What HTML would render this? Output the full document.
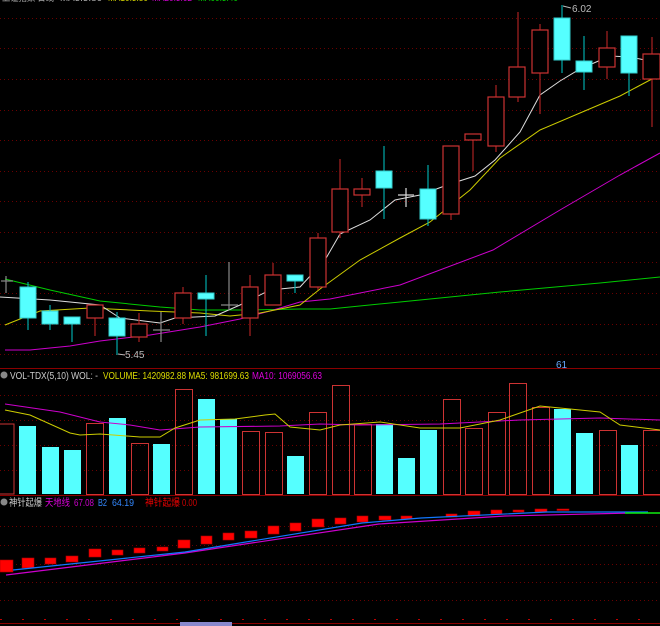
<!DOCTYPE html>
<html><head><meta charset="utf-8"><style>
html,body{margin:0;padding:0;background:#000;width:660px;height:626px;overflow:hidden}
svg{display:block}
text{font-family:"Liberation Sans","Noto Sans CJK SC",sans-serif;font-size:10px}
</style></head><body>
<svg width="660" height="626" viewBox="0 0 660 626" xmlns="http://www.w3.org/2000/svg">
<rect width="660" height="626" fill="#000"/>
<g stroke="#6a0000" stroke-width="1" stroke-dasharray="1,3">
<line x1="0" y1="18.5" x2="660" y2="18.5"/><line x1="0" y1="48.5" x2="660" y2="48.5"/>
<line x1="0" y1="79.5" x2="660" y2="79.5"/><line x1="0" y1="110.5" x2="660" y2="110.5"/>
<line x1="0" y1="140.5" x2="660" y2="140.5"/><line x1="0" y1="171.5" x2="660" y2="171.5"/>
<line x1="0" y1="201.5" x2="660" y2="201.5"/><line x1="0" y1="232.5" x2="660" y2="232.5"/>
<line x1="0" y1="262.5" x2="660" y2="262.5"/><line x1="0" y1="293.5" x2="660" y2="293.5"/>
<line x1="0" y1="324.5" x2="660" y2="324.5"/><line x1="0" y1="354.5" x2="660" y2="354.5"/>
<line x1="0" y1="395.5" x2="660" y2="395.5"/><line x1="0" y1="420.5" x2="660" y2="420.5"/>
<line x1="0" y1="445.5" x2="660" y2="445.5"/><line x1="0" y1="470.5" x2="660" y2="470.5"/>
<line x1="0" y1="526.5" x2="660" y2="526.5"/><line x1="0" y1="545.5" x2="660" y2="545.5"/>
<line x1="0" y1="564.5" x2="660" y2="564.5"/><line x1="0" y1="582.5" x2="660" y2="582.5"/>
<line x1="0" y1="600.5" x2="660" y2="600.5"/>
</g>
<line x1="0" y1="619.5" x2="660" y2="619.5" stroke="#c00000" stroke-dasharray="2,20"/>
<line x1="0" y1="368.5" x2="660" y2="368.5" stroke="#8a0000"/>
<line x1="0" y1="495.5" x2="660" y2="495.5" stroke="#8a0000"/>
<line x1="0" y1="623.5" x2="660" y2="623.5" stroke="#8a0000"/>
<rect x="180" y="622" width="52" height="4" fill="#8888cc"/>

<text x="2" y="1" fill="#aaa" textLength="52" lengthAdjust="spacingAndGlyphs">上证指数 日线</text>
<text x="60" y="1" fill="#aaa" textLength="42" lengthAdjust="spacingAndGlyphs">MA5:5.86</text><text x="108" y="1" fill="#cc0" textLength="40" lengthAdjust="spacingAndGlyphs">MA10:5.80</text><text x="152" y="1" fill="#c0c" textLength="40" lengthAdjust="spacingAndGlyphs">MA20:5.62</text><text x="198" y="1" fill="#0c0" textLength="40" lengthAdjust="spacingAndGlyphs">MA60:5.40</text>

<polyline fill="none" stroke="#0c0" stroke-width="1" points="5,279 50,290 100,301 160,307 200,310 250,310 300,309 330,309 400,302 500,292 600,283 660,277"/>
<polyline fill="none" stroke="#c0c" stroke-width="1" points="5,350 30,350 70,346 100,341 150,335 200,327 240,319 270,311 300,302 330,299 400,285 493,250 560,210 620,175 660,153"/>
<polyline fill="none" stroke="#cc0" stroke-width="1" points="5,325 40,311 90,308 150,311 200,313 230,316 260,313 300,305 320,289 360,260 400,238 430,222 470,190 500,158 540,130 580,113 620,96 650,80 660,76"/>
<polyline fill="none" stroke="#ddd" stroke-width="1" points="0,297 50,300 100,305 120,318 160,323 175,318 215,316 240,305 270,290 300,287 325,260 340,234 370,220 395,200 420,195 450,184 475,176 495,160 520,132 540,95 560,81 580,69 610,56 630,57 660,63"/>

<g stroke-width="1.2">
<g stroke="#0aa"><line x1="28" y1="282" x2="28" y2="330"/><line x1="50" y1="305" x2="50" y2="330"/><line x1="72" y1="317" x2="72" y2="342"/><line x1="117" y1="312" x2="117" y2="355"/><line x1="206" y1="275" x2="206" y2="336"/><line x1="295" y1="275" x2="295" y2="293"/><line x1="384" y1="146" x2="384" y2="219"/><line x1="428" y1="165" x2="428" y2="226"/><line x1="562" y1="5" x2="562" y2="73"/><line x1="584" y1="36" x2="584" y2="90"/><line x1="629" y1="36" x2="629" y2="96"/></g>
<g stroke="#a22"><line x1="95" y1="305" x2="95" y2="336"/><line x1="139" y1="313" x2="139" y2="342"/><line x1="183" y1="287" x2="183" y2="324"/><line x1="250" y1="275" x2="250" y2="336"/><line x1="273" y1="263" x2="273" y2="305"/><line x1="318" y1="233" x2="318" y2="290"/><line x1="340" y1="159" x2="340" y2="238"/><line x1="362" y1="178" x2="362" y2="207"/><line x1="451" y1="146" x2="451" y2="220"/><line x1="473" y1="134" x2="473" y2="171"/><line x1="496" y1="85" x2="496" y2="152"/><line x1="518" y1="12" x2="518" y2="102"/><line x1="540" y1="24" x2="540" y2="114"/><line x1="607" y1="31" x2="607" y2="79"/><line x1="652" y1="37" x2="652" y2="127"/></g>
<g stroke="#888"><line x1="6" y1="276" x2="6" y2="293"/><line x1="1" y1="281" x2="13" y2="281"/><line x1="161" y1="312" x2="161" y2="342"/><line x1="153" y1="330" x2="170" y2="330"/><line x1="229" y1="262" x2="229" y2="310"/><line x1="221" y1="305" x2="238" y2="305"/></g>
<g stroke="#ddd"><line x1="406" y1="188" x2="406" y2="207"/><line x1="398" y1="195" x2="414" y2="195"/></g>
</g>
<g fill="#5ff" stroke="#3cc">
<rect x="20" y="287" width="16" height="31"/><rect x="42" y="311" width="16" height="13"/><rect x="64" y="317" width="16" height="7"/><rect x="109" y="318" width="16" height="18"/><rect x="198" y="293" width="16" height="6"/><rect x="287" y="275" width="16" height="6"/><rect x="376" y="171" width="16" height="17"/><rect x="420" y="189" width="16" height="30"/><rect x="554" y="18" width="16" height="42"/><rect x="576" y="61" width="16" height="11"/><rect x="621" y="36" width="16" height="37"/>
</g>
<g fill="#000" stroke="#c33" stroke-width="1.2">
<rect x="87" y="305" width="16" height="13"/><rect x="131" y="324" width="16" height="13"/><rect x="175" y="293" width="16" height="25"/><rect x="242" y="287" width="16" height="31"/><rect x="265" y="275" width="16" height="30"/><rect x="310" y="238" width="16" height="49"/><rect x="332" y="189" width="16" height="43"/><rect x="354" y="189" width="16" height="6"/><rect x="443" y="146" width="16" height="68"/><rect x="465" y="134" width="16" height="6"/><rect x="488" y="97" width="16" height="49"/><rect x="509" y="67" width="16" height="30"/><rect x="532" y="30" width="16" height="43"/><rect x="599" y="48" width="16" height="19"/><rect x="643" y="54" width="17" height="25"/>
</g>
<text x="572" y="12" fill="#bbb">6.02</text><line x1="563" y1="6" x2="571" y2="8" stroke="#bbb"/>
<text x="125" y="358" fill="#bbb">5.45</text><line x1="118" y1="354" x2="125" y2="355" stroke="#bbb"/>
<text x="556" y="368" fill="#6af" font-size="8">61</text>

<circle cx="4" cy="375" r="3.5" fill="#888"/>
<text x="10" y="379" fill="#ccc" textLength="88" lengthAdjust="spacingAndGlyphs">VOL-TDX(5,10) WOL: -</text>
<text x="103" y="379" fill="#dd0" textLength="146" lengthAdjust="spacingAndGlyphs">VOLUME: 1420982.88 MA5: 981699.63</text>
<text x="252" y="379" fill="#d0d" textLength="70" lengthAdjust="spacingAndGlyphs">MA10: 1069056.63</text>

<g fill="#5ff">
<rect x="19" y="426" width="17" height="68"/><rect x="42" y="447" width="17" height="47"/><rect x="64" y="450" width="17" height="44"/><rect x="109" y="418" width="17" height="76"/><rect x="153" y="444" width="17" height="50"/><rect x="198" y="399" width="17" height="95"/><rect x="220" y="419" width="17" height="75"/><rect x="287" y="456" width="17" height="38"/><rect x="376" y="424" width="17" height="70"/><rect x="398" y="458" width="17" height="36"/><rect x="420" y="430" width="17" height="64"/><rect x="554" y="409" width="17" height="85"/><rect x="576" y="433" width="17" height="61"/><rect x="621" y="445" width="17" height="49"/>
</g>
<g fill="none" stroke="#c33" stroke-width="1">
<rect x="-1" y="424" width="15" height="70"/><rect x="86.5" y="423.5" width="17" height="71"/><rect x="131.5" y="443.5" width="17" height="51"/><rect x="175.5" y="389.5" width="17" height="105"/><rect x="242.5" y="431.5" width="17" height="63"/><rect x="265.5" y="432.5" width="17" height="62"/><rect x="309.5" y="412.5" width="17" height="82"/><rect x="332.5" y="385.5" width="17" height="109"/><rect x="354.5" y="424.5" width="17" height="70"/><rect x="443.5" y="399.5" width="17" height="95"/><rect x="465.5" y="428.5" width="17" height="66"/><rect x="488.5" y="412.5" width="17" height="82"/><rect x="509.5" y="383.5" width="17" height="111"/><rect x="532.5" y="407.5" width="17" height="87"/><rect x="599.5" y="430.5" width="17" height="64"/><rect x="643.5" y="430.5" width="17" height="64"/>
</g>
<polyline fill="none" stroke="#c0c" points="5,404 60,412 100,422 130,425 160,430 200,427 280,426 320,424 360,425 440,424 520,420 600,418 660,420"/>
<polyline fill="none" stroke="#cc0" points="5,410 30,415 70,433 80,435 100,434 140,437 160,437 175,428 200,420 235,419 265,415 275,414 290,427 300,428 320,430 340,425 380,422 420,428 460,428 500,420 540,406 580,410 600,412 620,425 660,430"/>

<circle cx="4" cy="502" r="3.5" fill="#888"/>
<text x="9" y="506" fill="#ccc" textLength="33" lengthAdjust="spacingAndGlyphs">神针起爆</text>
<text x="45" y="506" fill="#d0d" textLength="25" lengthAdjust="spacingAndGlyphs">天地线</text>
<text x="74" y="506" fill="#c0c" textLength="20" lengthAdjust="spacingAndGlyphs">67.08</text>
<text x="98" y="506" fill="#38f" textLength="9" lengthAdjust="spacingAndGlyphs">B2</text><text x="112" y="506" fill="#38f" textLength="22" lengthAdjust="spacingAndGlyphs">64.19</text>
<text x="145" y="506" fill="#e00" textLength="35" lengthAdjust="spacingAndGlyphs">神针起爆</text>
<text x="182" y="506" fill="#c00" textLength="15" lengthAdjust="spacingAndGlyphs">0.00</text>

<g fill="#f00" stroke="#a00" stroke-width="0.6">
<rect x="0" y="560" width="13" height="12"/><rect x="22" y="558" width="12" height="10"/><rect x="45" y="558" width="11" height="6"/><rect x="66" y="556" width="12" height="6"/><rect x="89" y="549" width="12" height="8"/><rect x="112" y="550" width="11" height="5"/><rect x="134" y="548" width="11" height="5"/><rect x="157" y="547" width="11" height="4"/><rect x="178" y="540" width="12" height="8"/><rect x="201" y="536" width="11" height="8"/><rect x="223" y="533" width="11" height="7"/><rect x="245" y="531" width="12" height="7"/><rect x="268" y="526" width="11" height="8"/><rect x="290" y="523" width="11" height="8"/><rect x="312" y="519" width="12" height="8"/><rect x="335" y="518" width="11" height="6"/><rect x="357" y="516" width="11" height="6"/><rect x="379" y="516" width="12" height="4"/><rect x="401" y="516" width="11" height="3"/><rect x="446" y="514" width="11" height="3"/><rect x="468" y="511" width="12" height="5"/><rect x="491" y="510" width="11" height="4"/><rect x="513" y="510" width="11" height="2"/><rect x="535" y="509" width="12" height="3"/><rect x="557" y="509" width="12" height="1.5"/>
</g>
<polyline fill="none" stroke="#c0c" stroke-width="1.2" points="6,575 185,553 379,524 505,516 631,513 660,513"/>
<polyline fill="none" stroke="#17f" stroke-width="1.2" points="13,570 185,552 362,523 421,518 547,512 648,512"/>
<line x1="625" y1="513" x2="660" y2="513" stroke="#0e0" stroke-width="1.5"/>
</svg>
</body></html>
